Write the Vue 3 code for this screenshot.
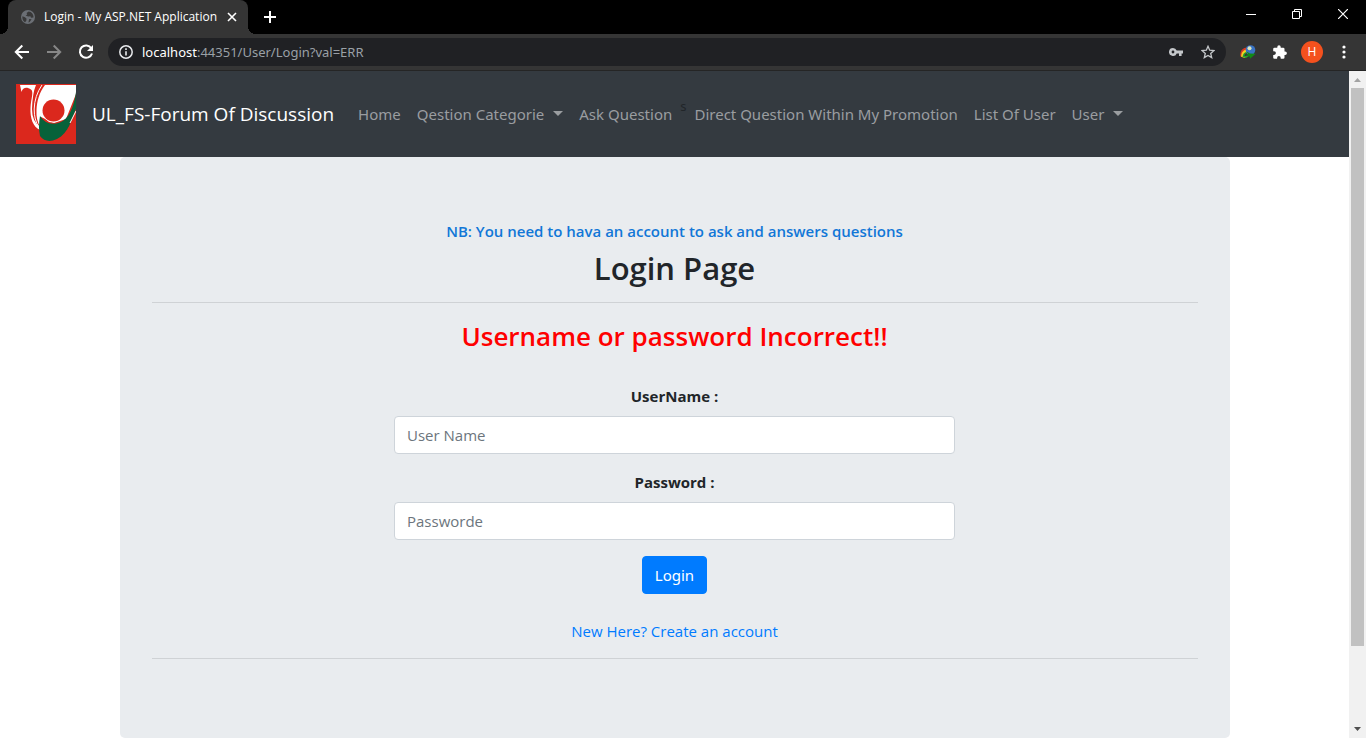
<script setup>
import { ref } from 'vue'

const username = ref('')
const password = ref('')
</script>

<template>
  <div class="window">
    <header class="tabstrip">
      <div class="tab">
        <svg class="globe" width="14" height="14" viewBox="0 0 14 14" aria-hidden="true">
          <circle cx="7" cy="7" r="7" fill="#6b6f75" />
          <path d="M1.4 6.2 4 7.2 5.6 8.8 5.2 11 4 12.2C2 11 1 8.600 1.400 6.200ZM7.600 1.500 5.600 3 6.200 4.400 4.600 5.600 7.200 6.400 9.400 6.200 10 7.800 12.500 7.600C12.800 4.600 10.600 1.700 7.600 1.500ZM8.200 9 10.600 9.200 8.600 12 7.400 12.400Z" fill="#383838" />
        </svg>
        <span class="tab-title">Login - My ASP.NET Application</span>
        <button class="icon-btn tab-close" type="button" aria-label="Close tab">
          <svg width="10" height="10" viewBox="0 0 10 10"><path d="M1 1l8 8M9 1l-8 8" stroke="#fff" stroke-width="1.600" /></svg>
        </button>
      </div>
      <button class="icon-btn new-tab" type="button" aria-label="New tab">
        <svg width="12" height="12" viewBox="0 0 12 12"><path d="M6 0v12M0 6h12" stroke="#fff" stroke-width="2" /></svg>
      </button>
      <div class="window-controls">
        <button class="icon-btn" type="button" aria-label="Minimize">
          <svg width="10" height="10" viewBox="0 0 10 10"><path d="M0 5.500h10" stroke="#fff" /></svg>
        </button>
        <button class="icon-btn" type="button" aria-label="Restore">
          <svg width="10" height="10" viewBox="0 0 10 10"><path d="M.5 2.500h7v7h-7zM2.500 2.500v-2h7v7h-2" fill="none" stroke="#fff" /></svg>
        </button>
        <button class="icon-btn" type="button" aria-label="Close">
          <svg width="10" height="10" viewBox="0 0 10 10"><path d="M0 0l10 10M10 0L0 10" stroke="#fff" stroke-width="1.200" /></svg>
        </button>
      </div>
    </header>

    <div class="toolbar">
      <div class="history">
        <button class="icon-btn" type="button" aria-label="Back">
          <svg width="16" height="16" viewBox="0 0 16 16"><path d="M15 8H2M8.300 1.500 1.800 8l6.500 6.500" fill="none" stroke="#fff" stroke-width="2" /></svg>
        </button>
        <button class="icon-btn" type="button" aria-label="Forward">
          <svg width="16" height="16" viewBox="0 0 16 16"><path d="M1 8h13M7.700 1.500 14.200 8l-6.500 6.500" fill="none" stroke="#878787" stroke-width="2" /></svg>
        </button>
        <button class="icon-btn" type="button" aria-label="Reload">
          <svg width="16" height="16" viewBox="0 0 16 16"><path d="M13.300 4.200A6.200 6.200 0 1 0 14 9.500" fill="none" stroke="#fff" stroke-width="2" /><path d="M15 1v6H9z" fill="#fff" /></svg>
        </button>
      </div>
      <div class="omnibox">
        <svg width="14" height="14" viewBox="0 0 14 14" aria-hidden="true">
          <circle cx="7" cy="7" r="6.200" fill="none" stroke="#e8eaed" stroke-width="1.500" />
          <path d="M7 6.200v4.300M7 3.300v1.700" stroke="#e8eaed" stroke-width="1.600" />
        </svg>
        <span class="url"><span class="host">localhost</span>:44351/User/Login?val=ERR</span>
        <button class="icon-btn" type="button" aria-label="Saved passwords">
          <svg width="14" height="10" viewBox="0 0 14 10"><path fill-rule="evenodd" d="M4 1a4 4 0 1 0 3.700 5.500H10V9h2.600V6.500H14v-3H7.700A4 4 0 0 0 4 1Zm0 2.600a1.400 1.400 0 1 1 0 2.800 1.400 1.400 0 0 1 0-2.800Z" fill="#c4c7ca" /></svg>
        </button>
        <button class="icon-btn" type="button" aria-label="Bookmark this page">
          <svg width="14" height="14" viewBox="0 0 14 14"><path d="M7 1.300l1.700 3.900 4.200.4-3.200 2.800 1 4.200L7 10.400l-3.700 2.200 1-4.200L1.100 5.600l4.200-.4z" fill="none" stroke="#c4c7ca" stroke-width="1.300" /></svg>
        </button>
      </div>
      <div class="extensions">
        <button class="icon-btn" type="button" aria-label="Download manager">
          <svg width="16" height="14" viewBox="0 0 16 14">
            <path d="M.5 11.500C-.5 6 3 2 8 2.500V8L5 13Z" fill="#d93a23" />
            <path d="M1.200 11.800C1 7 4 4.300 8 4.500V9L5 13Z" fill="#f5d321" />
            <path d="M2.500 12C2.800 8.500 5 6.500 8 7L9 11l-3 2Z" fill="#26a02d" />
            <path d="M4.500 11C4.500 9 6 8 8 8.500V11Z" fill="#353535" />
            <circle cx="10.500" cy="5" r="4.800" fill="#3973c5" />
            <circle cx="9.500" cy="3.300" r="2" fill="#dbe5bd" />
            <path d="M6.500 6.500l3.500 2 5.800.3-5.800 5-.3-2.300-4-1.200 2.300-1.300Z" fill="#118a16" />
          </svg>
        </button>
        <button class="icon-btn" type="button" aria-label="Extensions">
          <svg width="14" height="14" viewBox="0 0 14 14"><path d="M11.500 6.500V4A1.300 1.300 0 0 0 10.200 2.700H7.700V2a1.700 1.700 0 0 0-3.400 0v.7H1.500A1.300 1.300 0 0 0 .2 4v2.300h.9a1.800 1.800 0 0 1 0 3.600H.2v2.600a1.300 1.300 0 0 0 1.300 1.300h2.600v-.9a1.800 1.800 0 0 1 3.600 0v.9h2.500a1.300 1.300 0 0 0 1.300-1.300V9.900h.7a1.700 1.700 0 0 0 0-3.400z" fill="#fff" /></svg>
        </button>
        <button class="avatar" type="button" aria-label="Profile H">H</button>
        <button class="icon-btn" type="button" aria-label="Browser menu">
          <svg width="4" height="14" viewBox="0 0 4 14"><g fill="#fff"><circle cx="2" cy="2" r="1.600" /><circle cx="2" cy="7" r="1.600" /><circle cx="2" cy="12" r="1.600" /></g></svg>
        </button>
      </div>
    </div>

    <div class="viewport">
      <div class="page">
        <nav class="navbar">
          <a class="brand" href="#">
            <svg width="60" height="60" viewBox="0 0 60 60" role="img" aria-label="UL_FS logo">
              <path d="M0 0h60v60H0z" fill="#db281d" />
              <path d="M4 1H60V10L50 35L38 39L25 33L24 46C17 43 14 34 14.500 24C15 14 18 8 15 5.500C11 3 7 3 5.500 8Z" fill="#fff" />
              <path d="M20 1H29C23 9 21 17 20.500 26Q20 36 24 43Q16 37 16 25Q16.500 9 20 1Z" fill="#db281d" />
              <path d="M26 1Q18.500 12 18.200 25Q18 36 23 43" fill="none" stroke="#fff" stroke-width="1" />
              <path d="M60 8C58 23 53 35 44 38.500Q31 43 24 32Q22 43 24 52Q30 60 41 55C53 49 55 36 60 25Z" fill="#07623a" />
              <path d="M26 20Q25 34 33 38Q42 40 49 32L56 18L46 10H28Z" fill="#fff" />
              <circle cx="37.500" cy="26.500" r="11" fill="#db281d" />
              <path d="M60 27l-6 12" stroke="#fff" />
            </svg>
            <span>UL_FS-Forum Of Discussion</span>
          </a>
          <ul class="nav-list">
            <li><a href="#">Home</a></li>
            <li><a class="dropdown" href="#">Qestion Categorie</a></li>
            <li><a href="#">Ask Question</a></li>
            <li class="stray">s</li>
            <li><a href="#">Direct Question Within My Promotion</a></li>
            <li><a href="#">List Of User</a></li>
            <li><a class="dropdown" href="#">User</a></li>
          </ul>
        </nav>

        <main class="jumbotron">
          <h6>NB: You need to hava an account to ask and answers questions</h6>
          <h2>Login Page</h2>
          <hr />
          <h3>Username or password Incorrect!!</h3>
          <form class="login" @submit.prevent>
            <div class="field">
              <label for="username">UserName :</label>
              <input id="username" v-model="username" type="text" placeholder="User Name" />
            </div>
            <div class="field">
              <label for="password">Password :</label>
              <input id="password" v-model="password" type="password" placeholder="Passworde" />
            </div>
            <button class="submit" type="submit">Login</button>
          </form>
          <a class="register" href="#">New Here? Create an account</a>
          <hr />
        </main>
      </div>

      <div class="scrollbar" aria-hidden="true">
        <svg width="17" height="17" viewBox="0 0 17 17"><path d="M5 11h7L8.500 7z" fill="#a3a3a3" /></svg>
        <div class="thumb"></div>
        <div class="track"></div>
        <svg width="17" height="17" viewBox="0 0 17 17"><path d="M5 6h7l-3.500 4z" fill="#505050" /></svg>
      </div>
    </div>
  </div>
</template>

<style>
body {
  margin: 0;
  background: #fff;
}
</style>

<style scoped>
* {
  box-sizing: border-box;
}

.window {
  display: flex;
  flex-direction: column;
  min-height: 100vh;
  font-family: "Open Sans", "Noto Sans", sans-serif;
  font-size: 15px;
  line-height: 24px;
  color: #212529;
}

button,
input {
  font: inherit;
}

a {
  color: #007bff;
  text-decoration: none;
}

svg {
  display: block;
  flex: none;
}

.icon-btn {
  display: flex;
  align-items: center;
  justify-content: center;
  padding: 0;
  border: 0;
  background: none;
}

.tabstrip {
  display: flex;
  height: 34px;
  padding-left: 8px;
  background: #000;
}

.tab {
  position: relative;
  display: flex;
  align-items: center;
  width: 240px;
  padding: 0 11px 0 13px;
  border-radius: 8px 8px 0 0;
  background: #353535;
  color: #fff;
  font-size: 12px;
}

.tab::before,
.tab::after {
  content: "";
  position: absolute;
  bottom: 0;
  width: 8px;
  height: 8px;
}

.tab::before {
  right: 100%;
  background: radial-gradient(circle at 0 0, #000 8px, #353535 8px);
}

.tab::after {
  left: 100%;
  background: radial-gradient(circle at 100% 0, #000 8px, #353535 8px);
}

.tab-title {
  flex: 1;
  margin-left: 9px;
  white-space: nowrap;
}

.new-tab {
  width: 44px;
}

.window-controls {
  display: flex;
  height: 28px;
  margin-left: auto;
}

.window-controls .icon-btn {
  width: 46px;
}

.toolbar {
  display: flex;
  align-items: center;
  gap: 6px;
  height: 37px;
  padding: 0 6px 0 14px;
  border-bottom: 1px solid #252525;
  background: #353535;
}

.history {
  display: flex;
  gap: 16px;
  margin-right: 8px;
}

.omnibox {
  display: flex;
  flex: 1;
  align-items: center;
  gap: 18px;
  height: 28px;
  padding: 0 11px;
  border-radius: 14px;
  background: #202124;
  color: #9aa0a6;
  font-family: "Noto Sans", sans-serif;
  font-size: 13px;
}

.url {
  flex: 1;
  margin-left: -9px;
}

.host {
  color: #fff;
}

.extensions {
  display: flex;
  align-items: center;
}

.extensions .icon-btn {
  width: 32px;
}

.avatar {
  width: 22px;
  height: 22px;
  margin: 0 5px;
  padding: 0;
  border: 0;
  border-radius: 50%;
  background: #f4511e;
  color: #fff;
  font-size: 12px;
  line-height: 22px;
}

.viewport {
  display: flex;
  flex: 1;
}

.page {
  flex: 1;
  min-width: 0;
}

.navbar {
  display: flex;
  align-items: center;
  padding: 13px 16px;
  background: #343a40;
}

.brand {
  display: flex;
  align-items: center;
  gap: 16px;
  margin-right: 16px;
  color: #fff;
  font-size: 19px;
  white-space: nowrap;
}

.nav-list {
  display: flex;
  margin: 0;
  padding: 0;
  list-style: none;
  font-family: "Noto Sans", sans-serif;
  white-space: nowrap;
}

.nav-list a {
  display: block;
  padding: 8px;
  color: #9a9da0;
}

.dropdown::after {
  content: "";
  display: inline-block;
  margin-left: 9px;
  vertical-align: 4px;
  border: 5px solid transparent;
  border-top-color: currentColor;
  border-bottom: 0;
}

.stray {
  font-size: 13px;
}

.jumbotron {
  display: flow-root;
  max-width: 1110px;
  margin: 0 auto;
  padding: 64px 32px;
  border-radius: 5px;
  background: #e9ecef;
  text-align: center;
}

h2,
h3,
h6 {
  margin: 0;
  font-weight: 600;
}

h6 {
  margin-bottom: 8px;
  color: #1177d7;
  font-size: 15px;
  line-height: 20px;
}

h2 {
  font-size: 31px;
  line-height: 38px;
}

h3 {
  margin-bottom: 31px;
  color: #f00;
  font-size: 26px;
  line-height: 34px;
}

hr {
  height: 1px;
  margin: 15px 0;
  border: 0;
  background: #cfd2d5;
}

h3,
.register {
  padding-top: 1px;
}

.login {
  display: flex;
  flex-direction: column;
  align-items: center;
  gap: 16px;
  margin-bottom: 24px;
}

.field {
  display: flex;
  flex-direction: column;
  gap: 8px;
  width: 561px;
  max-width: 100%;
}

label {
  font-weight: 700;
}

input {
  width: 100%;
  height: 38px;
  padding: 6px 12px;
  border: 1px solid #ced4da;
  border-radius: 4px;
  background: #fff;
  color: #495057;
}

input::placeholder {
  color: #6c757d;
  opacity: 1;
}

.submit {
  height: 38px;
  padding: 6px 12px;
  border: 1px solid #007bff;
  border-radius: 4px;
  background: #007bff;
  color: #fff;
  font-family: "Noto Sans", sans-serif;
}

.register {
  display: block;
}

.scrollbar {
  display: flex;
  flex-direction: column;
  align-items: center;
  width: 17px;
  background: #f1f1f1;
}

.thumb {
  flex: 558;
  width: 13px;
  background: #c1c1c1;
}

.track {
  flex: 75;
}
</style>
